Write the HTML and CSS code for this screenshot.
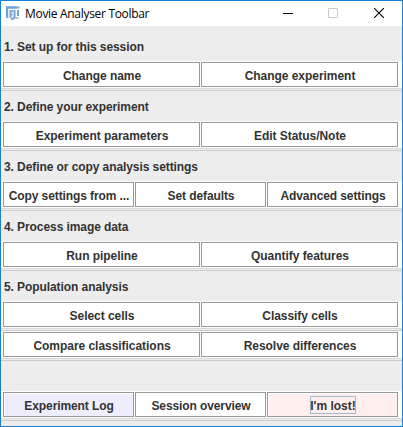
FILE: index.html
```html
<!DOCTYPE html>
<html lang="en">
<head>
<meta charset="utf-8">
<title>Movie Analyser Toolbar</title>
<link rel="stylesheet" href="styles.css">
</head>
<body>
<div class="window">
  <header class="titlebar">
    <svg class="logo" width="14" height="14" viewBox="0 0 14 14" fill="none" stroke="#72a3d8" stroke-width="2">
      <path d="M1 12V1.500H11" stroke-width="2.500"/>
      <path d="M10.500 1.500H13.500" stroke="#94a9bd"/>
      <path d="M4.500 12V5H7M4 8.500H6.500" stroke="#83a4c5"/>
      <path d="M8.500 4V11Q8.500 13 5 13"/>
      <path d="M12 4V10"/>
      <path d="M9.500 12H12.500" stroke="#9aabbc" stroke-width="1.500"/>
    </svg>
    <h1 class="title">Movie Analyser Toolbar</h1>
    <div class="controls">
      <svg width="10" height="10" viewBox="0 0 10 10"><path d="M0 5.500H10" stroke="#000"/></svg>
      <svg width="10" height="10" viewBox="0 0 10 10"><path d="M.5 .5H9.500V9.500H.5Z" fill="none" stroke="#ccc"/></svg>
      <svg class="close" width="10" height="10" viewBox="0 0 10 10"><path d="M0 0L10 10M10 0L0 10" stroke="#000" stroke-width="1.1"/></svg>
    </div>
  </header>
  <main>
    <h2 class="heading">1. Set up for this session</h2>
    <div class="row"><button>Change name</button><button>Change experiment</button></div>
    <h2 class="heading">2. Define your experiment</h2>
    <div class="row"><button>Experiment parameters</button><button>Edit Status/Note</button></div>
    <h2 class="heading">3. Define or copy analysis settings</h2>
    <div class="row thirds"><button>Copy settings from ...</button><button>Set defaults</button><button>Advanced settings</button></div>
    <h2 class="heading">4. Process image data</h2>
    <div class="row"><button>Run pipeline</button><button>Quantify features</button></div>
    <h2 class="heading">5. Population analysis</h2>
    <div class="row"><button>Select cells</button><button>Classify cells</button></div>
    <div class="row"><button>Compare classifications</button><button>Resolve differences</button></div>
    <div class="spacer"></div>
    <div class="row thirds"><button class="log">Experiment Log</button><button>Session overview</button><button class="lost"><span class="focus">I'm lost!</span></button></div>
  </main>
</div>
</body>
</html>
```
FILE: styles.css
```css
* { box-sizing: border-box; }
body { margin: 0; }
.window {
  width: 403px;
  height: 427px;
  border: 1px solid #1b80d3;
  background: #ededed;
  overflow: hidden;
}
.titlebar {
  display: flex;
  align-items: center;
  height: 25px;
  padding: 0 18px 1px 5px;
  background: #fff;
}
.logo { flex: none; }
.title {
  margin: 1px 0 0 5px;
  font: 400 12px/25px "Open Sans", sans-serif;
  letter-spacing: -0.31px;
  color: #000;
  white-space: nowrap;
}
.controls {
  display: flex;
  gap: 35px;
  margin-left: auto;
}
.controls svg { display: block; }
.controls .close { margin-left: 1px; }
main { padding-top: 5px; }
.heading {
  height: 30px;
  margin: 0;
  padding-left: 3px;
  font: 700 12px/33px "Liberation Sans", Arial, sans-serif;
  letter-spacing: -0.08px;
  color: #333;
  white-space: nowrap;
}
.row {
  display: flex;
  gap: 1px;
  height: 30px;
  padding: 1px 4px 4px 2px;
  background: linear-gradient(#fff 0 27px, #dadada 27px 28px, #ededed 28px 29px, #ccc 29px 30px);
}
button {
  flex: 1 1 0;
  min-width: 0;
  height: 25px;
  padding: 2px 0 0 1px;
  border: 1px solid #999;
  border-radius: 0;
  background: #fff;
  font: 700 12px/22px "Liberation Sans", Arial, sans-serif;
  letter-spacing: -0.04px;
  color: #333;
  white-space: nowrap;
}
.thirds button { letter-spacing: -0.1px; }
.log { background: #eeeeff; box-shadow: inset 1px 1px #fff; }
.lost { background: #ffeeee; box-shadow: inset 1px 1px #fff; }
.thirds .lost { letter-spacing: 0; }
.focus {
  display: inline-block;
  height: 18px;
  line-height: 20px;
  box-shadow: inset 0 0 0 1px #a3b8cc;
}
.spacer { height: 30px; }
```
